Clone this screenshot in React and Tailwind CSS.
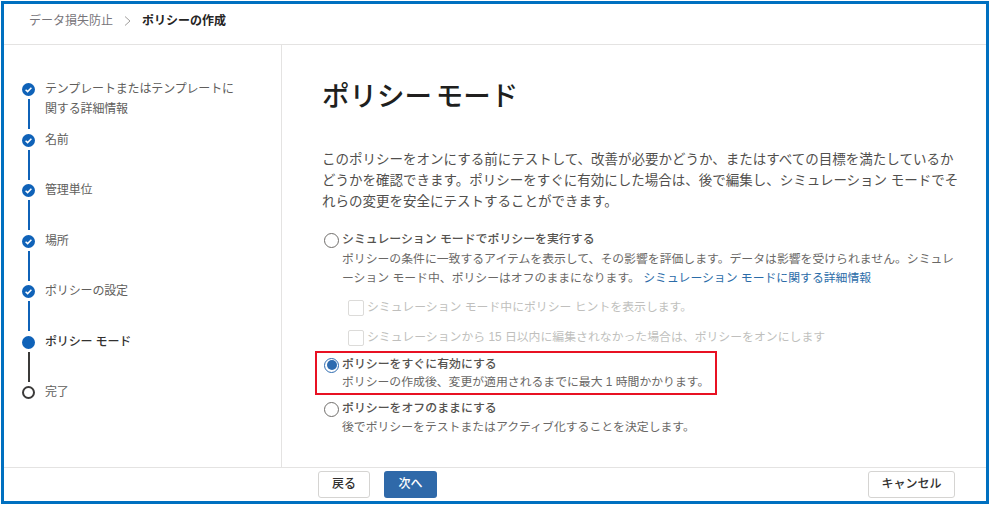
import React from 'react';

const FONT = "font-['Liberation_Sans','Noto_Sans_CJK_JP',sans-serif]";

const steps = [
  { label: 'テンプレートまたはテンプレートに\n関する詳細情報', state: 'done' },
  { label: '名前', state: 'done' },
  { label: '管理単位', state: 'done' },
  { label: '場所', state: 'done' },
  { label: 'ポリシーの設定', state: 'done' },
  { label: 'ポリシー モード', state: 'current' },
  { label: '完了', state: 'todo' },
];

const StepDot = ({ state }) => {
  if (state === 'done') {
    return (
      <svg width="13" height="13" viewBox="0 0 13 13" className="block">
        <circle cx="6.5" cy="6.5" r="6.5" fill="#0f62b8" />
        <path d="M3.6 6.7 5.6 8.6 9.4 4.7" fill="none" stroke="#fff" strokeWidth="1.5" />
      </svg>
    );
  }
  if (state === 'current') return <div className="w-[13px] h-[13px] rounded-full bg-[#0f62b8]" />;
  return <div className="w-[13px] h-[13px] rounded-full border-2 border-[#3b3a39] bg-white" />;
};

const Step = ({ label, state, last }) => (
  <div className="flex h-[50.5px] gap-[10px]">
    <div className="flex flex-col items-center w-[13px]">
      <StepDot state={state} />
      {!last && (
        <div className={`w-[2px] h-[30px] mt-[3px] ${state === 'current' ? 'bg-[#3b3a39]' : 'bg-[#0f62b8]'}`} />
      )}
    </div>
    <div className={`whitespace-pre-line text-[12px] tracking-[-0.15px] leading-[20px] -mt-[4px] ${state === 'current' ? 'text-[#323130] font-medium' : 'text-[#605e5c]'}`}>
      {label}
    </div>
  </div>
);

const Radio = ({ checked }) => (
  <div className={`w-[15px] h-[15px] shrink-0 rounded-full border flex items-center justify-center bg-white ${checked ? 'border-[#2f6cb0]' : 'border-[#706e6b]'}`}>
    {checked && <div className="w-[10px] h-[10px] rounded-full bg-[#2f6cb0]" />}
  </div>
);

const RadioOption = ({ checked, title, bodyClass, children }) => (
  <div>
    <div className="flex items-center gap-[3px] h-[20px] pl-[2px]">
      <Radio checked={checked} />
      <span className="text-[11.9px] font-medium text-[#55534f]">{title}</span>
    </div>
    <div className={`${bodyClass} pl-[20px] text-[11.85px] leading-[19px] text-[#6a6866]`}>{children}</div>
  </div>
);

const DisabledCheck = ({ children }) => (
  <div className="flex items-center gap-[3px] h-[20px] pl-[26px]">
    <div className="w-[16px] h-[16px] shrink-0 rounded-[2px] border border-[#dcdbd9] bg-white" />
    <span className="text-[11.87px] text-[#c0bfbd]">{children}</span>
  </div>
);

export default function App() {
  return (
    <div className={`${FONT} w-[991px] h-[505px] bg-white p-[1px] overflow-hidden`}>
      <div className="w-[988px] h-[503px] border-[3px] border-[#0070c0] flex flex-col">
        <div className="h-[41px] shrink-0 border-b border-[#e4e3e2] flex items-center pl-[25px] pb-[6px] text-[12px]">
          <span className="text-[#77757a]">データ損失防止</span>
          <svg width="7" height="10" viewBox="0 0 7 10" className="mx-[11px]">
            <path d="M1 .5 6 5 1 9.5" fill="none" stroke="#a19f9d" strokeWidth="1" />
          </svg>
          <span className="font-bold text-[#252423]">ポリシーの作成</span>
        </div>
        <div className="flex-1 min-h-0 flex">
          <aside className="w-[278px] shrink-0 border-r border-[#e4e3e2] pl-[18px] pt-[38px]">
            {steps.map((s, i) => (
              <Step key={s.label} label={s.label} state={s.state} last={i === steps.length - 1} />
            ))}
          </aside>
          <main className="flex-1 pl-[40px] pr-[24px] pt-[31px]">
            <h1 className="text-[27.5px] leading-[42px] font-medium text-[#201f1e] [word-spacing:-4px]">ポリシー モード</h1>
            <p className="mt-[31px] text-[13.5px] leading-[21px] text-[#514f4d]">
              このポリシーをオンにする前にテストして、改善が必要かどうか、またはすべての目標を満たしているかどうかを確認できます。ポリシーをすぐに有効にした場合は、後で編集し、シミュレーション モードでそれらの変更を安全にテストすることができます。
            </p>
            <div className="mt-[18px]">
              <RadioOption bodyClass="mt-0" title="シミュレーション モードでポリシーを実行する">
                ポリシーの条件に一致するアイテムを表示して、その影響を評価します。データは影響を受けられません。シミュレーション モード中、ポリシーはオフのままになります。
                <span className="text-[#2b6ca8]"> シミュレーション モードに関する詳細情報</span>
              </RadioOption>
              <div className="mt-[10px]"><DisabledCheck>シミュレーション モード中にポリシー ヒントを表示します。</DisabledCheck></div>
              <div className="mt-[10px]"><DisabledCheck>シミュレーションから 15 日以内に編集されなかった場合は、ポリシーをオンにします</DisabledCheck></div>
            </div>
            <div className="relative mt-[7px]">
              <div className="absolute -left-[7px] -top-[4px] w-[402px] h-[44px] border-2 border-[#e81123]" />
              <RadioOption bodyClass="-mt-[2px]" checked title="ポリシーをすぐに有効にする">
                ポリシーの作成後、変更が適用されるまでに最大 1 時間かかります。
              </RadioOption>
            </div>
            <div className="mt-[7px]">
              <RadioOption bodyClass="-mt-[1px]" title="ポリシーをオフのままにする">
                後でポリシーをテストまたはアクティブ化することを決定します。
              </RadioOption>
            </div>
          </main>
        </div>
        <div className="h-[34px] shrink-0 border-t border-[#e4e3e2] flex items-center pl-[314px] pr-[31px] pb-[1px]">
          <button className="w-[52px] h-[27px] rounded-[3px] border border-[#d5d4d2] bg-white text-[12px] font-medium text-[#323130]">戻る</button>
          <button className="ml-[14px] w-[53px] h-[27px] rounded-[3px] bg-[#2f69a9] text-[12px] font-medium text-white">次へ</button>
          <button className="ml-auto w-[87px] h-[27px] rounded-[3px] border border-[#d5d4d2] bg-white text-[12px] font-medium text-[#323130]">キャンセル</button>
        </div>
      </div>
    </div>
  );
}
